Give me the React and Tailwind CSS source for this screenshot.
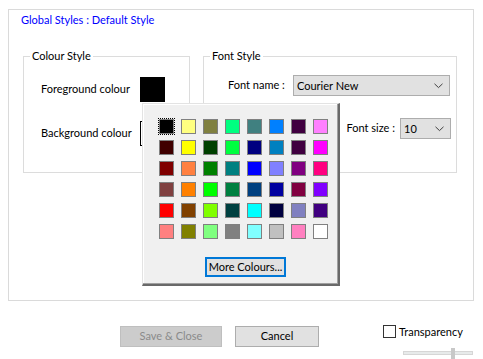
import React from "react";

const rows = [
  ["#000000", "#ffff80", "#808040", "#00ff80", "#408080", "#0080ff", "#400040", "#ff80ff"],
  ["#400000", "#ffff00", "#004000", "#00ff40", "#000080", "#0080c0", "#400040", "#ff00ff"],
  ["#800000", "#ff8040", "#008000", "#008080", "#0000ff", "#8080ff", "#800080", "#ff0080"],
  ["#804040", "#ff8000", "#00ff00", "#008040", "#004080", "#0000a0", "#800040", "#8000ff"],
  ["#ff0000", "#804000", "#80ff00", "#004040", "#00ffff", "#000040", "#8080c0", "#400080"],
  ["#ff8080", "#808000", "#80ff80", "#808080", "#80ffff", "#c0c0c0", "#ff80c0", "#ffffff"],
];

function Chevron() {
  return (
    <svg width="9" height="6" viewBox="0 0 9 6" className="shrink-0">
      <polyline points="0.5,0.8 4.5,4.6 8.5,0.8" fill="none" stroke="#404040" strokeWidth="1" />
    </svg>
  );
}

function Select({ value, className }) {
  return (
    <div className={"flex items-center justify-between h-[21px] bg-[#e1e1e1] border border-[#adadad] pl-[3px] pr-[6px] " + className}>
      <span className="leading-[16px] whitespace-nowrap">{value}</span>
      <Chevron />
    </div>
  );
}

export default function App() {
  return (
    <div
      className="relative w-[483px] h-[359px] bg-white text-[11px] text-black overflow-hidden whitespace-nowrap"
      style={{ fontFamily: 'Lato, "Noto Sans", sans-serif' }}
    >
      <div className="pt-[9px] pl-[8px]">
        <div className="w-[466px] h-[292px] border border-[#dadada]">
          <div className="pt-[2px] pl-[12px] leading-[16px] text-[#0000ff]">Global Styles : Default Style</div>
          <div className="flex mt-[20px] pl-[14px] gap-[13px]">
            <fieldset className="w-[167px] h-[125px] border border-[#dcdcdc]">
              <legend className="ml-[6px] px-[2px] leading-[16px]">Colour Style</legend>
              <div className="flex flex-col gap-[19px] pt-[13px] pl-[17px]">
                <div className="flex items-center h-[25px]">
                  <span className="w-[99px]">Foreground colour</span>
                  <div className="w-[25px] h-[25px] bg-black" />
                </div>
                <div className="flex items-center h-[25px]">
                  <span className="w-[99px]">Background colour</span>
                  <div className="w-[25px] h-[25px] bg-white border border-black" />
                </div>
              </div>
            </fieldset>
            <fieldset className="w-[254px] h-[125px] border border-[#dcdcdc]">
              <legend className="ml-[6px] px-[2px] leading-[16px]">Font Style</legend>
              <div className="flex flex-col gap-[22px] pt-[11px] pr-[5px]">
                <div className="flex items-center pl-[24px]">
                  <span className="w-[65px]">Font name :</span>
                  <Select value="Courier New" className="w-[157px]" />
                </div>
                <div className="flex items-center justify-end gap-[5px]">
                  <span>Font size :</span>
                  <Select value="10" className="w-[51px]" />
                </div>
              </div>
            </fieldset>
          </div>
        </div>
      </div>

      <div className="flex items-start pt-[25px] pl-[120px]">
        <div className="w-[102px] h-[21px] flex items-center justify-center bg-[#cccccc] border border-[#bfbfbf] text-[#8a8a8a]">
          Save &amp; Close
        </div>
        <div className="ml-[13px] w-[84px] h-[21px] flex items-center justify-center bg-[#e1e1e1] border border-[#adadad]">
          Cancel
        </div>
        <div className="ml-[64px] -mt-[1px] flex flex-col">
          <div className="flex items-center gap-[3px] h-[13px]">
            <div className="w-[13px] h-[13px] border border-[#333333] bg-white" />
            <span className="leading-[16px]">Transparency</span>
          </div>
          <div className="relative mt-[13px] ml-[20px] w-[70px] h-[4px] bg-[#e7eaea] border border-[#d6d6d6]">
            <div className="absolute left-[47px] -top-[4px] w-[4px] h-[11px] bg-[#c8c8c8]" />
          </div>
        </div>
      </div>

      <div className="absolute left-[142px] top-[103px] w-[198px] h-[183px] bg-[#f0f0f0] border-l border-t border-[#e3e3e3] border-r-2 border-b-2 border-r-[#696969] border-b-[#696969] shadow-[inset_-1px_-1px_0_#a0a0a0,inset_1px_1px_0_#ffffff]">
        <div className="grid grid-cols-[repeat(8,15px)] gap-x-[7px] gap-y-[6px] pt-[15px] pl-[16px]">
          {rows.flat().map((c, i) => (
            <div
              key={i}
              className={
                "w-[15px] h-[15px] border border-[#808080]" +
                (i === 0 ? " outline outline-1 outline-dotted outline-black" : "")
              }
              style={{ backgroundColor: c }}
            />
          ))}
        </div>
        <div className="mt-[18px] ml-[62px] w-[81px] h-[20px] flex items-center justify-center bg-[#e1e1e1] border-2 border-[#0078d7]">
          More Colours...
        </div>
      </div>
    </div>
  );
}
